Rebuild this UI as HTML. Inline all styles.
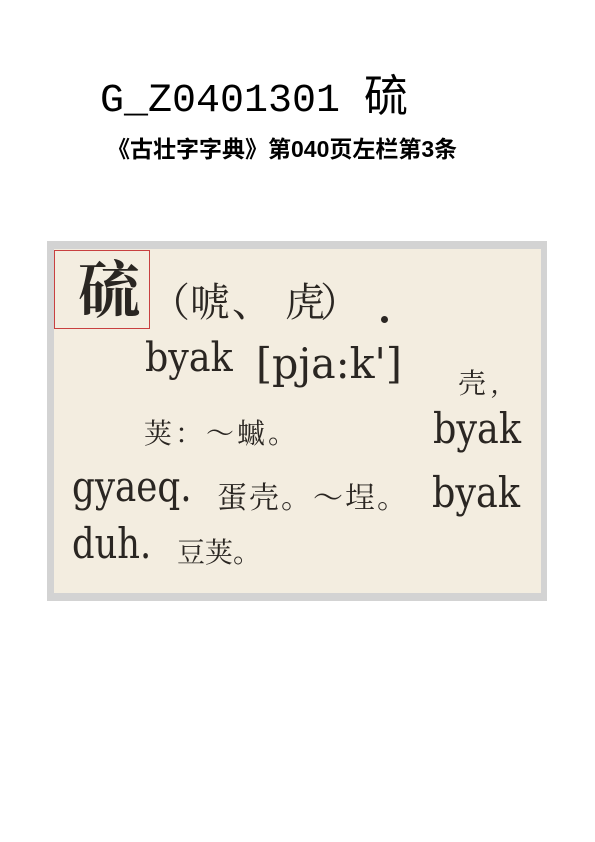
<!DOCTYPE html>
<html><head><meta charset="utf-8"><style>
body{margin:0;width:595px;height:842px;background:#fff;position:relative;overflow:hidden}
.a{position:absolute;white-space:nowrap;line-height:1}
.s{font-family:"DejaVu Serif","Liberation Serif",serif;color:#2a2622;transform-origin:0 0}
.c{font-family:"Noto Serif CJK SC",serif;color:#2a2622}
</style></head><body>
<div class="a" style="left:100px;top:60px;font:40px 'Liberation Mono','Noto Sans CJK SC',monospace;color:#000">G_Z0401301 <span style="font-family:'Noto Sans CJK SC',sans-serif;font-size:44px">硫</span></div>
<div class="a" style="left:107px;top:130px;font:bold 23px 'Liberation Sans','Noto Sans CJK SC',sans-serif;color:#000">《古壮字字典》第040页左栏第3条</div>
<div class="a" style="left:47px;top:241px;width:500px;height:360px;background:#d3d3d3"></div>
<div class="a" style="left:54px;top:249px;width:487px;height:344px;background:#f3ede0"></div>
<div class="a" style="left:54px;top:250px;width:94px;height:77px;border:1.5px solid #c84040"></div>
<div class="a c" style="left:78px;top:255px;font-size:62px;font-weight:bold">硫</div>
<div class="a c" style="left:150px;top:280px;font-size:40px">（</div>
<div class="a c" style="left:190px;top:280px;font-size:40px">唬</div>
<div class="a c" style="left:232px;top:280px;font-size:40px">、</div>
<div class="a c" style="left:285px;top:280px;font-size:40px">虎</div>
<div class="a c" style="left:320px;top:280px;font-size:40px">）</div>
<div class="a" style="left:381px;top:316px;width:7px;height:7px;border-radius:50%;background:#2a2622"></div>
<div class="a s" style="left:145px;top:338px;font-size:40px;transform:scaleX(0.91)">byak</div>
<div class="a s" style="left:256px;top:343px;font-size:42px;transform:scaleX(0.98)">[pja:k']</div>
<div class="a c" style="left:458px;top:368px;font-size:28px;letter-spacing:4px">壳,</div>
<div class="a c" style="left:144px;top:418px;font-size:28px;letter-spacing:3px">荚：～䗩。</div>
<div class="a s" style="left:433px;top:408px;font-size:42px;transform:scaleX(0.87)">byak</div>
<div class="a s" style="left:72px;top:466px;font-size:42px;transform:scaleX(0.85)">gyaeq.</div>
<div class="a c" style="left:217px;top:480px;font-size:30px;letter-spacing:2px">蛋壳。～埕。</div>
<div class="a s" style="left:432px;top:472px;font-size:42px;transform:scaleX(0.87)">byak</div>
<div class="a s" style="left:72px;top:523px;font-size:42px;transform:scaleX(0.84)">duh.</div>
<div class="a c" style="left:177px;top:537px;font-size:28px">豆荚。</div>
</body></html>
